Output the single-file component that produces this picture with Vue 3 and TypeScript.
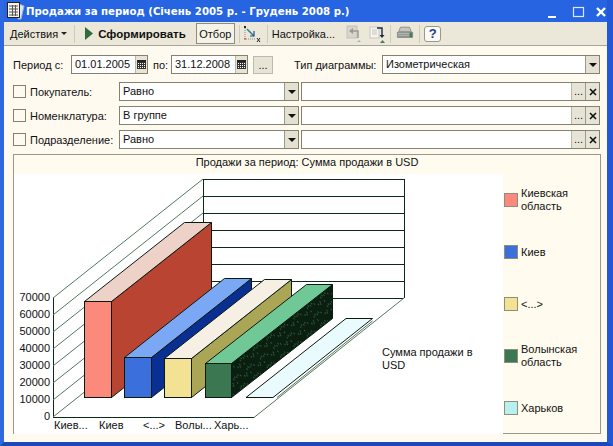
<script setup lang="ts">
const wallLines = [179, 196, 213, 230, 247, 264, 281, 298]
const axis = ['70000', '60000', '50000', '40000', '30000', '20000', '10000', '0']
const cats = [
  { t: 'Киев...', x: 54 },
  { t: 'Киев', x: 99 },
  { t: '<...>', x: 143 },
  { t: 'Волы...', x: 175 },
  { t: 'Харь...', x: 214 },
]
const bars = [
  { x: 84.5, w: 27, top: 301.5, front: '#fb8a7c', side: '#b94431', cap: '#eed2c8', dx: 100, dy: 79 },
  { x: 124.5, w: 27, top: 357.5, front: '#3b6fdc', side: '#0a2f93', cap: '#7ba8f5', dx: 100, dy: 79 },
  { x: 164.5, w: 27, top: 358.5, front: '#f4e294', side: '#aba655', cap: '#f5f0e3', dx: 100, dy: 79 },
  { x: 205.5, w: 26, top: 363.5, front: '#3b7750', side: 'url(#speck)', cap: '#70c896', dx: 101, dy: 79 },
]
const base = 397.5
const legend = [
  { t: 'Киевская область', c: '#fb8a7c' },
  { t: 'Киев', c: '#3b6fdc' },
  { t: '<...>', c: '#f4e294' },
  { t: 'Волынская область', c: '#3b7750' },
  { t: 'Харьков', c: '#b8f0f2' },
]
const rows = [
  { label: 'Покупатель:', cond: 'Равно' },
  { label: 'Номенклатура:', cond: 'В группе' },
  { label: 'Подразделение:', cond: 'Равно' },
]
function pts(a: number[]): string {
  const out: string[] = []
  for (let i = 0; i < a.length; i += 2) out.push(a[i] + ',' + a[i + 1])
  return out.join(' ')
}
</script>

<template>
  <div class="window">
    <div class="title">
      <svg class="app-icon" width="21" height="22" viewBox="0 0 21 22">
        <path d="M14 4l5 2-3 13h-3z" fill="#dfe6f2" stroke="#9fb0d0" stroke-width="1" />
        <rect x="2.500" y="2.500" width="12" height="15" fill="#f6f4ea" stroke="#222" />
        <path d="M4 6h9M4 9h9M4 12h9M4 15h9M7.500 5v11M10.500 5v11" stroke="#555" stroke-width="1" />
      </svg>
      <span class="title-text">Продажи за период (Січень 2005 р. - Грудень 2008 р.)</span>
      <div class="win-btns">
        <svg width="14" height="14" viewBox="0 0 14 14"><path d="M2 12h8" stroke="#fff" stroke-width="2" /></svg>
        <svg width="14" height="14" viewBox="0 0 14 14"><rect x="1.500" y="2.500" width="10" height="9" fill="none" stroke="#dfe9fb" stroke-width="1.200" /></svg>
        <svg width="14" height="14" viewBox="0 0 14 14"><path d="M3 3l8 8M11 3l-8 8" stroke="#fff" stroke-width="2.400" /></svg>
      </div>
    </div>

    <div class="body">
      <div class="toolbar">
        <span class="tb-text actions">Действия <i class="tri"></i></span>
        <span class="sep sep-a"></span>
        <svg class="play" width="9" height="13" viewBox="0 0 9 13"><path d="M0 0l8 6.500-8 6.500z" fill="#2f6b3c" /></svg>
        <b class="tb-bold">Сформировать</b>
        <span class="otbor">Отбор</span>
        <span class="sep sep-b"></span>
        <svg class="tb-icon axes" width="18" height="18" viewBox="0 0 18 18">
          <path d="M2 3v11h11" fill="none" stroke="#888" stroke-dasharray="1 1" />
          <path d="M4 4l7 7" stroke="#2a7f8f" stroke-width="1.500" />
          <path d="M11 6v5h-4" fill="none" stroke="#234a9c" stroke-width="1.200" />
          <path d="M14 13l3 4M17 13l-3 4" stroke="#222" />
          <path d="M1 1l2 2M3 1l-2 2" stroke="#222" />
          <path d="M1 14h2" stroke="#c33" />
        </svg>
        <span class="sep sep-c"></span>
        <span class="tb-text">Настройка...</span>
        <svg class="tb-icon undo" width="18" height="18" viewBox="0 0 18 18">
          <rect x="2" y="1" width="10" height="12" fill="#d8d6cc" stroke="#c4c2b8" />
          <path d="M7 6h6v7" fill="none" stroke="#9a9a92" stroke-width="1.500" />
          <path d="M4 6l4-3v6z" fill="#9a9a92" />
          <path d="M12 17l2-2 2 2z" fill="#a9b3a9" />
        </svg>
        <svg class="tb-icon redo" width="18" height="18" viewBox="0 0 18 18">
          <rect x="1" y="2" width="9" height="11" fill="#f5f4ee" stroke="#c9c7bd" />
          <path d="M3 5h5M3 7h5M3 9h5" stroke="#c8c6ba" />
          <path d="M8 3h5v9" fill="none" stroke="#1c2a44" stroke-width="1.400" />
          <path d="M10.500 10h5L13 13z" fill="#1c2a44" />
          <path d="M11 18l2.500-3 2.500 3z" fill="#4a7a5a" />
        </svg>
        <span class="sep sep-d"></span>
        <svg class="tb-icon printer" width="18" height="15" viewBox="0 0 20 16">
          <path d="M5 1h10l2 5H3z" fill="#c6c6c0" stroke="#8a8a84" />
          <rect x="1" y="6" width="18" height="7" rx="1" fill="#8f9490" />
          <path d="M2 8h16M2 10h16" stroke="#b9bcb6" />
          <rect x="15" y="7" width="3" height="5" fill="#4a7a55" />
        </svg>
        <span class="sep sep-e"></span>
        <span class="help">?</span>
      </div>

      <div class="form">
        <div class="row first">
          <span class="lbl-period">Период с:</span>
          <span class="field date">
            <span class="val">01.01.2005</span>
            <span class="cal">
              <svg width="9" height="9" viewBox="0 0 9 9">
                <rect width="9" height="2" fill="#222" />
                <rect y="2" width="9" height="7" fill="#fff" />
                <path d="M0 2.500h9M0 4.500h9M0 6.500h9M0 8.500h9M.5 2v7M2.500 2v7M4.500 2v7M6.500 2v7M8.500 2v7" stroke="#333" stroke-width="1" />
              </svg>
            </span>
          </span>
          <span class="lbl-po">по:</span>
          <span class="field date">
            <span class="val">31.12.2008</span>
            <span class="cal">
              <svg width="9" height="9" viewBox="0 0 9 9">
                <rect width="9" height="2" fill="#222" />
                <rect y="2" width="9" height="7" fill="#fff" />
                <path d="M0 2.500h9M0 4.500h9M0 6.500h9M0 8.500h9M.5 2v7M2.500 2v7M4.500 2v7M6.500 2v7M8.500 2v7" stroke="#333" stroke-width="1" />
              </svg>
            </span>
          </span>
          <span class="dots-btn">...</span>
          <span class="lbl-type">Тип диаграммы:</span>
          <span class="field grow"><span class="val">Изометрическая</span><span class="drop"><i></i></span></span>
        </div>
        <div v-for="r in rows" :key="r.label" class="row filter">
          <span class="check"></span>
          <span class="lbl-filter">{{ r.label }}</span>
          <span class="field cond"><span class="val">{{ r.cond }}</span><span class="drop"><i></i></span></span>
          <span class="field grow">
            <span class="val"></span>
            <span class="pick">...</span>
            <span class="clear">
              <svg width="8" height="8" viewBox="0 0 8 8"><path d="M1 1l6 6M7 1L1 7" stroke="#111" stroke-width="1.600" /></svg>
            </span>
          </span>
        </div>
      </div>

      <div class="chart">
        <div class="chart-title">Продажи за период: Сумма продажи в USD</div>
        <div class="chart-main">
          <svg class="plot" width="489" height="260" viewBox="14 174 489 260">
            <defs>
              <pattern id="speck" width="17" height="11" patternUnits="userSpaceOnUse" patternTransform="rotate(-38)">
                <rect width="17" height="11" fill="#0a1f0f" />
                <path d="M1 3h1M3 2h1M5 3h1M7 2h1M9 4h1M2 8h1M12 7h1M14 8h1M15 6h1" stroke="#4f8a60" stroke-width="1" />
              </pattern>
            </defs>
            <rect x="14" y="174" width="489" height="260" fill="#fff" />
            <g shape-rendering="crispEdges">
              <line v-for="y in wallLines" :key="y" x1="203" :y1="y + 0.5" x2="404" :y2="y + 0.5" stroke="#0c2a1a" />
              <line x1="203.500" y1="179" x2="203.500" y2="298" stroke="#0c2a1a" />
              <line x1="404.500" y1="179" x2="404.500" y2="298" stroke="#0c2a1a" />
              <line x1="53" y1="417.500" x2="254" y2="417.500" stroke="#0c2a1a" />
              <line x1="53.500" y1="297" x2="53.500" y2="417" stroke="#0c2a1a" />
            </g>
            <line v-for="y in wallLines" :key="'d' + y" x1="53" :y1="y + 119" x2="203" :y2="y" stroke="#55775f" />
            <line x1="254" y1="417.500" x2="404" y2="298" stroke="#55775f" />

            <g v-for="b in bars" :key="b.x" stroke="#0a1a10" stroke-width="1">
              <polygon :points="pts([b.x + b.w, b.top, b.x + b.w + b.dx, b.top - b.dy, b.x + b.w + b.dx, base - b.dy, b.x + b.w, base])" :fill="b.side" />
              <polygon :points="pts([b.x, b.top, b.x + b.dx, b.top - b.dy, b.x + b.w + b.dx, b.top - b.dy, b.x + b.w, b.top])" :fill="b.cap" />
              <rect :x="b.x" :y="b.top" :width="b.w" :height="base - b.top" :fill="b.front" />
            </g>
            <polygon points="246,397.500 346,318.500 372.500,318.500 273,397.500" fill="#e9fbfc" stroke="#0a1a10" />
            <line x1="277" y1="397.500" x2="372.500" y2="321" stroke="#55775f" />

            <g class="ax" text-anchor="end">
              <text v-for="(a, i) in axis" :key="a" x="50" :y="301 + i * 17">{{ a }}</text>
            </g>
            <g class="ax">
              <text v-for="c in cats" :key="c.t" :x="c.x" y="429">{{ c.t }}</text>
              <text x="382" y="356">Сумма продажи в</text>
              <text x="382" y="369">USD</text>
            </g>
          </svg>
          <div class="legend">
            <div v-for="l in legend" :key="l.t" class="leg-item">
              <span class="swatch" :style="{ background: l.c }"></span>
              <span class="leg-text">{{ l.t }}</span>
            </div>
          </div>
        </div>
      </div>
    </div>
  </div>
</template>

<style>
html, body { margin: 0; padding: 0; background: #2f63d8; }
</style>

<style scoped>
.window {
  width: 613px;
  height: 446px;
  box-sizing: border-box;
  display: flex;
  flex-direction: column;
  background: #2358d6;
  border-left: 4px solid #2e68e0;
  border-right: 6px solid #2358d6;
  border-bottom: 4px solid #1c49b8;
  font-family: "Liberation Sans", Arial, sans-serif;
  font-size: 11px;
  color: #111;
  overflow: hidden;
}
.title {
  height: 22px;
  flex: none;
  display: flex;
  align-items: center;
  margin-left: -4px;
  padding-left: 5px;
  margin-right: -6px;
  padding-right: 5px;
  background: #2664e2;
  color: #fff;
}
.app-icon { flex: none; }
.title-text {
  font: bold 10.200px "DejaVu Sans", sans-serif;
  white-space: nowrap;
}
.win-btns {
  margin-left: auto;
  display: flex;
  gap: 8px;
  padding-top: 1px;
}
.win-btns svg:first-child { margin-right: 4px; }
.body {
  flex: 1;
  min-height: 0;
  display: flex;
  flex-direction: column;
  background: #fffaf0;
}
.toolbar {
  height: 24px;
  flex: none;
  box-sizing: border-box;
  display: flex;
  align-items: center;
  background: #ebe8da;
  border-bottom: 1px solid #a8a698;
  padding-left: 6px;
}
.tb-text { white-space: nowrap; }
.actions { display: flex; align-items: center; gap: 3px; flex: none; }
.tri {
  width: 0;
  height: 0;
  border-left: 3px solid transparent;
  border-right: 3px solid transparent;
  border-top: 3px solid #222;
}
.sep {
  width: 1px;
  height: 18px;
  background: #cfccbd;
  flex: none;
}
.sep-a { margin: 0 10px 0 7px; }
.sep-b { margin: 0 3px 0 4px; }
.sep-c { margin: 0 4px 0 6px; }
.sep-d { margin: 0 5px 0 3px; }
.sep-e { margin: 0 4px 0 5px; }
.play { flex: none; margin-right: 4px; }
.tb-bold { font-size: 11.500px; white-space: nowrap; }
.otbor {
  margin-left: 10px;
  width: 39px;
  height: 21px;
  box-sizing: border-box;
  display: flex;
  align-items: center;
  justify-content: center;
  border: 1px solid #8e8c7e;
  background: #f5f3e8;
  flex: none;
}
.axes { flex: none; }
.undo { margin-left: 10px; flex: none; }
.redo { margin-left: 6px; flex: none; }
.printer { flex: none; }
.help {
  width: 17px;
  height: 16px;
  box-sizing: border-box;
  border: 1px solid #9a988a;
  border-radius: 3px;
  background: #fbfaf4;
  color: #1c3a9c;
  font-weight: bold;
  font-size: 13px;
  line-height: 14px;
  text-align: center;
}
.form {
  flex: none;
  display: flex;
  flex-direction: column;
  padding: 9px 7px 0 9px;
  gap: 5px;
}
.row { display: flex; align-items: center; height: 19px; }
.first { margin-bottom: 3px; }
.lbl-period { width: 58px; flex: none; }
.lbl-po { width: 23px; padding-left: 5px; box-sizing: border-box; flex: none; }
.lbl-type { margin-left: 21px; width: 88px; white-space: nowrap; flex: none; }
.field {
  height: 19px;
  box-sizing: border-box;
  display: flex;
  align-items: stretch;
  background: #fff;
  border: 1px solid #84826f;
}
.val {
  flex: 1;
  padding-left: 3px;
  line-height: 17px;
  white-space: nowrap;
  overflow: hidden;
}
.date { width: 77px; flex: none; }
.cal {
  width: 11px;
  flex: none;
  background: #e7e4d6;
  border-left: 1px solid #bab8a8;
  display: flex;
  align-items: center;
  justify-content: center;
}
.dots-btn {
  margin-left: 5px;
  width: 20px;
  height: 18px;
  box-sizing: border-box;
  border: 1px solid #bdbbab;
  background: #e7e4d6;
  text-align: center;
  line-height: 16px;
  flex: none;
}
.grow { flex: 1; min-width: 0; }
.drop {
  width: 13px;
  flex: none;
  background: #e4e1d3;
  border-left: 1px solid #9c9a8a;
  display: flex;
  align-items: center;
  justify-content: center;
}
.drop i {
  width: 0;
  height: 0;
  border-left: 4px solid transparent;
  border-right: 4px solid transparent;
  border-top: 4px solid #111;
}
.check {
  width: 13px;
  height: 13px;
  box-sizing: border-box;
  border: 1px solid #84826f;
  background: #fffaf0;
  flex: none;
  margin-right: 4px;
}
.lbl-filter { width: 89px; flex: none; white-space: nowrap; }
.cond { width: 180px; flex: none; margin-right: 2px; }
.pick {
  width: 13px;
  flex: none;
  background: #e7e4d6;
  border-left: 1px solid #bab8a8;
  text-align: center;
  line-height: 17px;
}
.clear {
  width: 13px;
  flex: none;
  background: #e7e4d6;
  border-left: 1px solid #9c9a8a;
  display: flex;
  align-items: center;
  justify-content: center;
}
.chart {
  margin: 5px 6px 8px 9px;
  flex: 1;
  min-height: 0;
  box-sizing: border-box;
  border: 1px solid #9a9888;
  background: #fffbee;
  display: flex;
  flex-direction: column;
}
.chart-title {
  height: 19px;
  flex: none;
  text-align: center;
  line-height: 15px;
}
.chart-main {
  flex: 1;
  min-height: 0;
  display: flex;
}
.plot { display: block; flex: none; }
.ax { font: 11px "Liberation Sans", Arial, sans-serif; fill: #111; }
.legend {
  flex: 1;
  display: flex;
  flex-direction: column;
  padding-left: 1px;
}
.leg-item {
  height: 52px;
  flex: none;
  display: flex;
  align-items: center;
  gap: 3px;
}
.swatch {
  width: 14px;
  height: 14px;
  box-sizing: border-box;
  border: 1px solid #8f8d7e;
  flex: none;
}
.leg-text { width: 64px; line-height: 13px; }
</style>
